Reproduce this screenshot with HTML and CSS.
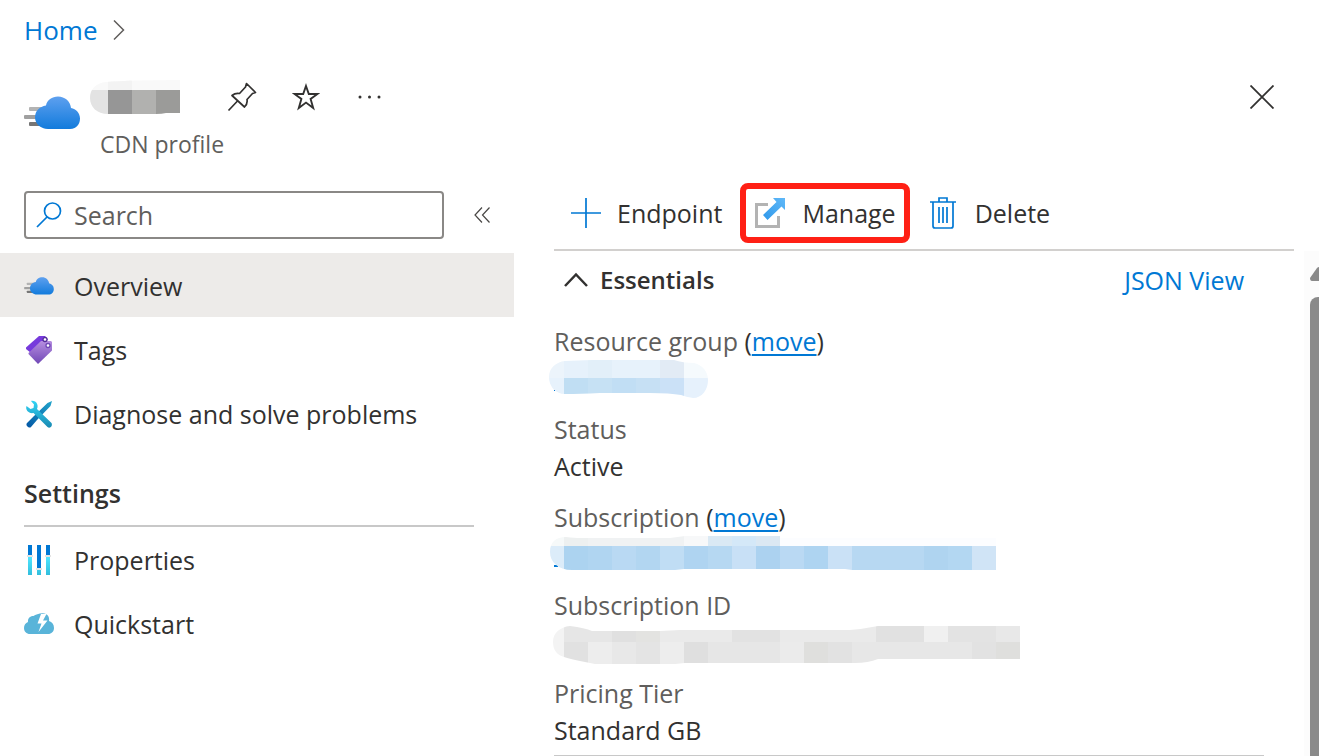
FILE: index.html
```html
<!DOCTYPE html>
<html lang="en">
<head>
<meta charset="utf-8">
<title>CDN profile</title>
<meta name="viewport" content="width=device-width, initial-scale=1">
<link rel="stylesheet" href="styles.css">
</head>
<body>
<svg class="defs" width="0" height="0" aria-hidden="true">
  <defs>
    <linearGradient id="cloudFill" x1="0" y1="0" x2="0" y2="1"><stop offset="0" stop-color="#5ea0ef"/><stop offset="1" stop-color="#127bdc"/></linearGradient>
    <linearGradient id="tagFill" x1="0" y1="0" x2="0" y2="1"><stop offset="0" stop-color="#b78ee0"/><stop offset="1" stop-color="#7048b6"/></linearGradient>
    <linearGradient id="wrenchFill" x1="0" y1="0" x2="0" y2="1"><stop offset="0" stop-color="#32d4f5"/><stop offset="1" stop-color="#198ab3"/></linearGradient>
    <linearGradient id="driverFill" x1="1" y1="0" x2="0" y2="1"><stop offset="0" stop-color="#22a5cb"/><stop offset="1" stop-color="#0356a5"/></linearGradient>
    <linearGradient id="barFill" x1="0" y1="0" x2="0" y2="1"><stop offset="0" stop-color="#50e6ff"/><stop offset="1" stop-color="#32bedd"/></linearGradient>
    <linearGradient id="arrowFill" x1="1" y1="0" x2="0" y2="1"><stop offset="0" stop-color="#5fb8f8"/><stop offset="1" stop-color="#2f98ea"/></linearGradient>
    <symbol id="cdn" viewBox="0 0 56 34">
      <rect x="5" y="11" width="18" height="4" rx="1" fill="#b3b3b3"/>
      <rect x="0" y="19" width="18" height="4" rx="1" fill="#a0a0a0"/>
      <rect x="5" y="26" width="18" height="4" rx="1" fill="#767676"/>
      <path d="M46 33H24C17 33 11 28 11 21.500C11 15 15.500 10.500 22 9.500C23 4 28 0.500 34 0.500C41 0.500 46.500 5.500 47 12C52 13 56 17 56 22.500C56 28.500 52 33 46 33Z" fill="url(#cloudFill)"/>
    </symbol>
  </defs>
</svg>

<nav class="breadcrumb" aria-label="Breadcrumb">
  <a class="link" href="#">Home</a>
  <svg width="12" height="20" viewBox="0 0 12 20" aria-hidden="true"><path d="M1 .5L10.500 10L1 19.500" fill="none" stroke="#605e5c" stroke-width="1.500"/></svg>
</nav>

<header class="header">
  <svg class="header-icon" width="56" height="34" aria-hidden="true"><use href="#cdn"/></svg>
  <div class="heading">
    <div class="title-row">
      <svg class="redacted-name" width="90" height="34" viewBox="90 80 90 34" role="img" aria-label="Hidden name">
        <clipPath id="nameClip"><path d="M106 82Q130 80 180 80V113H166Q162 114 156 114H108C97 114 90 107 90 98S96 83 106 82Z"/></clipPath>
        <g clip-path="url(#nameClip)">
          <path fill="#f9f9f9" d="M90 80h90v10H90z"/><path fill="#f3f3f3" d="M108 80h24v10h-24z"/>
          <path fill="#e3e3e3" d="M90 90h18v24H90z"/><path fill="#969696" d="M108 90h24v24h-24z"/><path fill="#b1b1af" d="M132 90h24v24h-24z"/><path fill="#9b9b99" d="M156 90h24v24h-24z"/>
        </g>
      </svg>
      <button class="icon-button pin" aria-label="Pin"><svg width="30" height="30" viewBox="0 0 30 30"><path d="M19.500 1.500L28.500 10.500L25.500 11.500L20 17.500C20.500 20 20 22.500 17.500 25L5 13.500C8 11 10 11 12.500 11.500L18.500 5ZM10.500 19L1.500 28.500" fill="none" stroke="#323130" stroke-width="1.700" stroke-linejoin="round"/></svg></button>
      <button class="icon-button star" aria-label="Favorite"><svg width="28" height="28" viewBox="0 0 28 28"><path d="M14 3L16.800 11H25.500L18.600 16L21.200 25L14 19.600L6.800 25L9.400 16L2.500 11H11.200Z" fill="none" stroke="#323130" stroke-width="1.900"/></svg></button>
      <button class="icon-button more" aria-label="More"><svg width="24" height="4" viewBox="0 0 24 4" fill="#323130"><circle cx="2" cy="2" r="1.500"/><circle cx="11.500" cy="2" r="1.500"/><circle cx="21" cy="2" r="1.500"/></svg></button>
      <button class="icon-button close" aria-label="Close"><svg width="24" height="24" viewBox="0 0 24 24"><path d="M.5 .5L23.500 23.500M23.500 .5L.5 23.500" stroke="#323130" stroke-width="1.800"/></svg></button>
    </div>
    <div class="subtitle">CDN profile</div>
  </div>
</header>

<div class="columns">
  <aside class="sidebar">
    <div class="search-row">
      <label class="search">
        <svg width="26" height="26" viewBox="0 0 26 26" aria-hidden="true"><circle cx="16.500" cy="9" r="8" fill="none" stroke="#0078d4" stroke-width="1.700"/><path d="M11 15L1 25" stroke="#0078d4" stroke-width="1.700"/></svg>
        <input type="text" placeholder="Search" aria-label="Search">
      </label>
      <button class="icon-button" aria-label="Collapse menu"><svg width="16" height="16" viewBox="0 0 16 16"><path d="M8 .5L1 8L8 15.500M15.500 .5L8.500 8L15.500 15.500" fill="none" stroke="#484644" stroke-width="1.200"/></svg></button>
    </div>
    <nav aria-label="Resource menu">
      <a class="item active" href="#"><svg width="30" height="18" aria-hidden="true"><use href="#cdn"/></svg>Overview</a>
      <a class="item" href="#"><svg width="30" height="30" viewBox="0 0 30 30" aria-hidden="true"><path d="M15 1H21L24 4.500L7 18L2 14V12.500Z" fill="#773adc"/><path d="M17 6H27L28 7V15.500L14 29L4.500 19V18Z" fill="url(#tagFill)"/><circle cx="21" cy="4.500" r="2" fill="#fff" stroke="#552f99" stroke-width="1.300"/><circle cx="24" cy="10.500" r="2" fill="#fff" stroke="#7048b6" stroke-width="1.300"/></svg>Tags</a>
      <a class="item" href="#"><svg width="30" height="30" viewBox="0 0 30 30" aria-hidden="true"><path d="M28 2L26.500 7L13 21L7 28C5 30 1 26 3 24L10 17L23.500 4Z" fill="url(#driverFill)"/><path d="M7 2C12 1 15 6 13 10L27.500 24C29 27 26 30 23.500 28L9.500 14C5 15 1 11 2.500 7L6.500 10L9.500 9L10 5.500Z" fill="url(#wrenchFill)"/></svg>Diagnose and solve problems</a>
      <h2 class="group-title">Settings</h2>
      <a class="item" href="#"><svg width="30" height="32" viewBox="0 0 30 32" aria-hidden="true"><path d="M4 1h4v10H4zM13 1h4v23h-4zM22 1h4v10h-4z" fill="#0078d4"/><path d="M4 13h4v18H4zM13 26h4v5h-4zM22 13h4v18h-4z" fill="url(#barFill)"/><path d="M3 11h6v2H3zM12 24h6v2h-6zM21 11h6v2h-6z" fill="#e4e4e4"/></svg>Properties</a>
      <a class="item" href="#"><svg width="30" height="22" viewBox="0 0 30 22" aria-hidden="true"><path d="M6 21C2.500 21 0 18.500 0 15C0 12 1.500 10 4 9C3.500 5 6.500 3 9.500 3C12 1.500 18 -1 22 1C24.500 2.500 25.500 5 25 8C28 9 30 11.500 30 15C30 18.500 27.500 21 24 21Z" fill="#59b4d9"/><path d="M17 1L13.500 10.500H17.500L14.500 19L23.500 7.500H19L22.500 1Z" fill="#fff"/></svg>Quickstart</a>
    </nav>
  </aside>

  <main class="content">
    <div class="panel">
      <div class="toolbar">
        <button class="command add"><svg width="30" height="30" viewBox="0 0 30 30" aria-hidden="true"><path d="M15 0V30M0 15H30" stroke="#0078d4" stroke-width="1.700"/></svg>Endpoint</button>
        <button class="command manage"><svg width="32" height="32" viewBox="0 0 32 32" aria-hidden="true"><path d="M14 7.500H2.500V29.500H24.500V19" fill="none" stroke="#b3b3b3" stroke-width="3"/><path d="M19 1H31V13L27.500 9.500L13.500 23L9 18L22.500 5Z" fill="url(#arrowFill)"/></svg>Manage</button>
        <button class="command delete"><svg width="26" height="32" viewBox="0 0 26 32" aria-hidden="true"><path d="M0 5H26M9 5V1H17V5M3 5V29Q3 31 5 31H21Q23 31 23 29V5M9 10V26M13 10V26M17 10V26" fill="none" stroke="#0078d4" stroke-width="1.700"/></svg>Delete</button>
      </div>
      <div class="essentials">
        <button class="toggle" aria-expanded="true"><svg width="24" height="16" viewBox="0 0 24 16" aria-hidden="true"><path d="M1 14L12 2.500L23 14" fill="none" stroke="#323130" stroke-width="2.500"/></svg>Essentials</button>
        <a class="link" href="#">JSON View</a>
      </div>
      <dl class="fields">
        <div><dt>Resource group <span class="paren">(<a class="link move" href="#">move</a>)</span></dt>
          <dd><svg class="redacted-group" width="159" height="38" viewBox="549 360 159 38" role="img" aria-label="Hidden resource group">
            <clipPath id="groupClip"><path d="M565 361Q600 359 674 360Q683 363 694 363C703 365 708 372 708 380C708 390 702 398 693 398Q686 397 681 395Q670 393 650 393H600Q580 394 565 394C555 394 549 386 549 377S556 362 565 361Z"/></clipPath>
            <g clip-path="url(#groupClip)">
              <path fill="#ecf4fb" d="M549 360h15v18h-15z"/><path fill="#e6f1fb" d="M564 360h24v18h-24z"/><path fill="#e2eff9" d="M588 360h24v18h-24z"/><path fill="#e7f2fb" d="M612 360h48v18h-48z"/><path fill="#e2ebf5" d="M660 360h24v18h-24z"/><path fill="#f5fafd" d="M684 360h24v18h-24z"/>
              <path fill="#e7f2fc" d="M549 378h15v20h-15z"/><path fill="#c0def3" d="M564 378h24v20h-24z"/><path fill="#c6e1f4" d="M588 378h24v20h-24z"/><path fill="#c1def4" d="M612 378h24v20h-24z"/><path fill="#c6e0f4" d="M636 378h24v20h-24z"/><path fill="#cbe1f7" d="M660 378h24v20h-24z"/><path fill="#e6f1fc" d="M684 378h24v20h-24z"/>
            </g><path fill="#0078d4" d="M554 390h1v1h-1z"/>
          </svg></dd></div>
        <div><dt>Status</dt><dd>Active</dd></div>
        <div><dt>Subscription <span class="paren">(<a class="link move" href="#">move</a>)</span></dt>
          <dd><svg class="redacted-sub" width="447" height="34" viewBox="549 536 447 34" role="img" aria-label="Hidden subscription">
            <path fill="#0078d4" d="M554 565h4v2h-4z"/>
            <clipPath id="subClip"><path d="M566 537Q575 538 580 538H670L685 536H780V538H996V570H852L845 569H684L675 570H572C558 570 550 562 550 552S556 537 566 537Z"/></clipPath>
            <g clip-path="url(#subClip)">
              <path fill="#f6f9f9" d="M549 536h15v10h-15z"/><path fill="#edf0f0" d="M564 536h24v10h-24z"/><path fill="#f0f2f3" d="M588 536h96v10h-96z"/><path fill="#f7f8f9" d="M684 536h24v10h-24z"/><path fill="#dae9f4" d="M708 536h24v10h-24z"/><path fill="#d4e8f8" d="M732 536h24v10h-24z"/><path fill="#dbe8f3" d="M756 536h24v10h-24z"/><path fill="#fcfdff" d="M780 536h216v10H780z"/>
              <path fill="#dcecf9" d="M549 546h15v24h-15z"/><path fill="#acd3f0" d="M564 546h24v24h-24z"/><path fill="#b0d5f1" d="M588 546h24v24h-24z"/><path fill="#b9d9f3" d="M612 546h24v24h-24z"/><path fill="#b2d6f1" d="M636 546h24v24h-24z"/><path fill="#c0ddf4" d="M660 546h24v24h-24z"/><path fill="#afd4f1" d="M684 546h24v24h-24z"/><path fill="#b6d8f2" d="M708 546h24v24h-24z"/><path fill="#c8e0f6" d="M732 546h24v24h-24z"/><path fill="#acd2f0" d="M756 546h24v24h-24z"/><path fill="#bad9f3" d="M780 546h24v24h-24z"/><path fill="#aed4f1" d="M804 546h24v24h-24z"/><path fill="#cae1f6" d="M828 546h24v24h-24z"/><path fill="#b7d8f2" d="M852 546h72v24h-72z"/><path fill="#afd4f0" d="M924 546h24v24h-24z"/><path fill="#b3d7f2" d="M948 546h24v24h-24z"/><path fill="#d0e4f6" d="M972 546h24v24h-24z"/>
            </g>
          </svg></dd></div>
        <div><dt>Subscription ID</dt>
          <dd><svg class="redacted-id" width="467" height="40" viewBox="553 624 467 40" role="img" aria-label="Hidden subscription ID">
            <clipPath id="idClip"><path d="M570 626Q585 628 592 631H660L680 630H850Q863 629 878 626H1020V659H878Q868 663 855 663H685L675 664H595L580 661Q570 659 564 657C557 655 553 650 553 642C553 633 560 627 570 626Z"/></clipPath>
            <g clip-path="url(#idClip)">
              <path fill="#f3f3f3" d="M553 626h11v38h-11z"/><path fill="#e6e6e6" d="M564 626h48v16h-48z"/><path fill="#e0e0e0" d="M612 626h24v16h-24z"/><path fill="#e3e3e1" d="M636 626h24v16h-24z"/><path fill="#eaeaea" d="M660 626h72v16h-72z"/><path fill="#e2e2e2" d="M732 626h48v16h-48z"/><path fill="#eaeaea" d="M780 626h96v16h-96z"/><path fill="#e1e1e1" d="M876 626h48v16h-48z"/><path fill="#f0f0f0" d="M924 626h24v16h-24z"/><path fill="#e3e3e3" d="M948 626h48v16h-48z"/><path fill="#e8e8e8" d="M996 626h24v16h-24z"/>
              <path fill="#e1e1e1" d="M564 642h24v22h-24z"/><path fill="#ededed" d="M588 642h24v22h-24z"/><path fill="#e8e8e8" d="M612 642h24v22h-24z"/><path fill="#e4e4e4" d="M636 642h24v22h-24z"/><path fill="#ededed" d="M660 642h24v22h-24z"/><path fill="#dfdfdf" d="M684 642h24v22h-24z"/><path fill="#e6e6e6" d="M708 642h72v22h-72z"/><path fill="#ebebeb" d="M780 642h24v22h-24z"/><path fill="#dfdfdd" d="M804 642h24v22h-24z"/><path fill="#e2e2e2" d="M828 642h24v22h-24z"/><path fill="#e7e7e7" d="M852 642h120v22H852z"/><path fill="#e2e2e2" d="M972 642h24v22h-24z"/><path fill="#dfdfdd" d="M996 642h24v22h-24z"/>
            </g>
          </svg></dd></div>
        <div><dt>Pricing Tier</dt><dd>Standard GB</dd></div>
      </dl>
    </div>
    <div class="scroll-track" aria-hidden="true">
      <svg width="18" height="14" viewBox="0 0 18 14"><path d="M7 1Q9 -1 11 1L18 11Q18 14 16 14H2Q0 14 0 11Z" fill="#8a8a8a"/></svg>
      <div class="scroll-thumb"></div>
    </div>
  </main>
</div>
</body>
</html>
```

FILE: styles.css
```css
* { box-sizing: border-box; }

body {
  margin: 0;
  min-height: 100vh;
  display: flex;
  flex-direction: column;
  background: #fff;
  color: #323130;
  font: 25px/36px "Open Sans", "Noto Sans", sans-serif;
}

svg { display: block; flex: none; }
.defs { position: absolute; }
button { border: 0; padding: 0; background: none; color: inherit; font: inherit; cursor: pointer; }
a { color: inherit; text-decoration: none; }
.link { color: #0078d4; }

.breadcrumb { display: flex; align-items: center; gap: 16px; height: 59px; padding-left: 24px; font-size: 26px; }

.header { display: flex; gap: 10px; padding: 18px 45px 21px 24px; }
.header-icon { margin-top: 19px; }
.heading { flex: 1; }
.title-row { display: flex; align-items: center; height: 40px; }
.icon-button { display: flex; align-items: center; justify-content: center; }
.pin { margin-left: 47px; }
.star { margin-left: 35px; }
.more { margin-left: 38px; }
.close { margin-left: auto; }
.subtitle { margin-top: 9px; padding-left: 10px; font-size: 23px; color: #605e5c; }

.columns { flex: 1; display: flex; }
.sidebar { flex: none; width: 514px; padding-top: 8px; }
.search-row { display: flex; gap: 30px; padding: 0 24px; margin-bottom: 14px; }
.search { display: flex; align-items: center; gap: 12px; width: 420px; height: 48px; padding: 0 10px; border: 2px solid #8a8886; border-radius: 4px; }
.search input { flex: 1; min-width: 0; border: 0; padding: 0; outline: 0; background: none; color: inherit; font: inherit; }
.search input::placeholder { color: #605e5c; opacity: 1; }

.item { display: flex; align-items: center; gap: 20px; height: 64px; padding: 2px 24px 0; }
.item.active { background: #edebe9; }
.group-title { margin: 30px 40px 0 24px; padding-bottom: 14px; border-bottom: 2px solid #c8c8c8; font-size: 25px; font-weight: 600; }

.content { flex: 1; min-width: 0; display: flex; padding-left: 40px; }
.panel { flex: 1; min-width: 0; }
.toolbar { display: flex; align-items: flex-start; height: 68px; margin-right: 10px; border-bottom: 2px solid #d2d0ce; }
.command { display: flex; align-items: center; gap: 16px; height: 60px; }
.add { padding: 0 18px 0 17px; }
.manage { padding: 0 8px; border: 6px solid #ff2015; border-radius: 8px; }
.delete { padding-left: 20px; gap: 19px; }

.essentials { display: flex; justify-content: space-between; align-items: center; height: 58px; padding: 0 60px 0 10px; }
.toggle { display: flex; align-items: center; gap: 12px; font-size: 24px; font-weight: 600; }

.fields { display: flex; flex-direction: column; gap: 16px; margin: 0 40px 0 0; padding: 14px 0 8px; border-bottom: 1px solid #c8c8c8; }
dt { color: #605e5c; }
dd { height: 36px; margin: 0; padding-top: 1px; }
.paren { color: #323130; }
.move { text-decoration: underline; text-decoration-thickness: 2px; text-underline-offset: 3px; }
.redacted-group, .redacted-sub { margin-left: -5px; }
.redacted-id { margin-left: -1px; }

.scroll-track { display: flex; flex-direction: column; width: 15px; margin-top: 68px; padding: 16px 0 0 6px; gap: 16px; overflow: hidden; background: #fcfcfc; }
.scroll-thumb { flex: 1; width: 18px; border-radius: 8px 8px 0 0; background: #8a8a8a; }
```
